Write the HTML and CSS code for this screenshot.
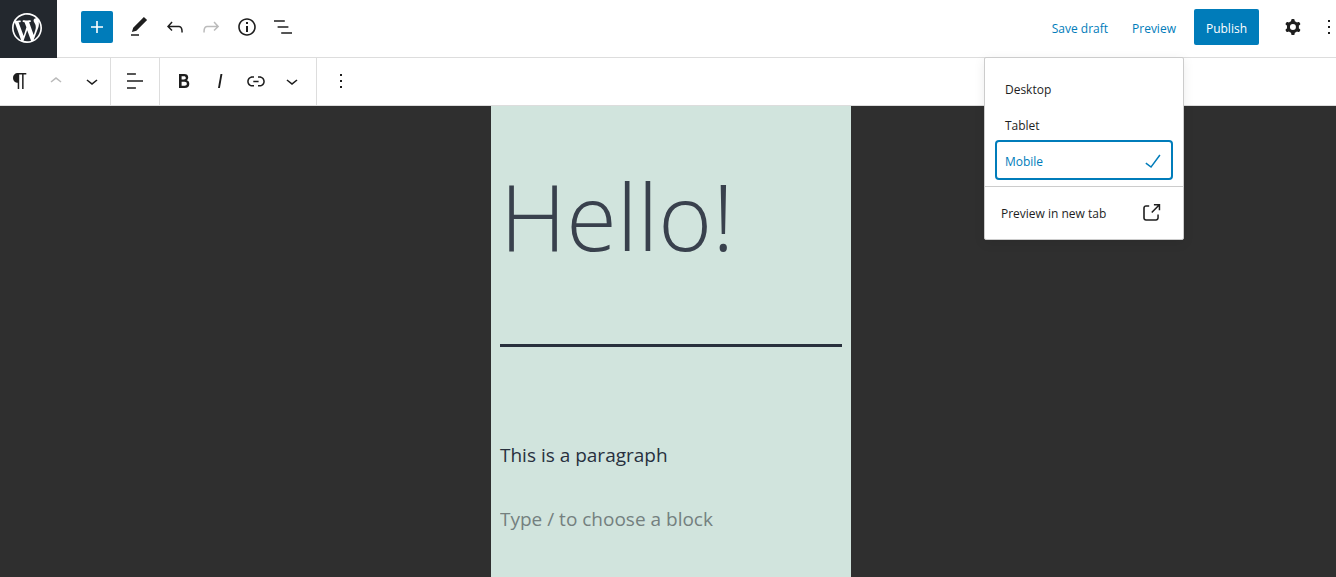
FILE: index.html
```html
<!DOCTYPE html>
<html lang="en">

<head>
    <meta charset="UTF-8">
    <meta name="viewport" content="width=device-width, initial-scale=1.0">
    <title>Edit Page</title>
    <link rel="stylesheet" href="styles.css">
</head>

<body>
    <header class="editor-header">
        <a class="site-logo" href="#" aria-label="View pages">
            <svg viewBox="-2 -2 24 24"><path d="M20 10c0-5.51-4.49-10-10-10C4.48 0 0 4.49 0 10c0 5.52 4.48 10 10 10 5.51 0 10-4.48 10-10zM7.78 15.37L4.37 6.22c.55-.02 1.17-.08 1.17-.08.5-.06.44-1.13-.06-1.11 0 0-1.45.11-2.37.11-.18 0-.37 0-.58-.01C4.12 2.69 6.87 1.11 10 1.11c2.33 0 4.45.87 6.05 2.34-.68-.11-1.65.39-1.65 1.58 0 .74.45 1.36.9 2.1.35.61.55 1.36.55 2.46 0 1.49-1.4 5-1.4 5l-3.03-8.37c.54-.02.82-.17.82-.17.5-.05.44-1.25-.06-1.22 0 0-1.44.12-2.38.12-.87 0-2.33-.12-2.33-.12-.5-.03-.56 1.2-.06 1.22l.92.08 1.26 3.41zM17.41 10c.24-.64.74-1.87.43-4.25.7 1.29 1.05 2.71 1.05 4.25 0 3.29-1.73 6.24-4.4 7.78.97-2.59 1.94-5.2 2.92-7.78zM6.1 18.09C3.12 16.65 1.11 13.53 1.11 10c0-1.3.23-2.48.72-3.59C3.25 10.3 4.67 14.2 6.1 18.09zm4.03-6.63l2.58 6.98c-.86.29-1.76.45-2.71.45-.79 0-1.57-.11-2.29-.33.81-2.38 1.62-4.74 2.42-7.1z"/></svg>
        </a>
        <div class="header-tools">
            <button class="inserter" aria-label="Add block">
                <svg viewBox="0 0 24 24"><path d="M18 11.2h-5.2V6h-1.6v5.2H6v1.6h5.2V18h1.6v-5.2H18z"/></svg>
            </button>
            <button class="icon-button" aria-label="Modes">
                <svg viewBox="0 0 24 24"><path d="M20.1 5.1L16.9 2 6.2 12.7l-1.3 4.4 4.5-1.3L20.1 5.1zM4 20.8h8v-1.5H4v1.5z"/></svg>
            </button>
            <button class="icon-button" aria-label="Undo">
                <svg viewBox="0 0 24 24"><path d="M18.3 11.7c-.6-.6-1.4-.9-2.3-.9H6.7l2.9-3.3-1.1-1-4.5 5L8.5 16l1-1-2.7-2.7H16c.5 0 .9.2 1.3.5 1 1 1 3.4 1 4.5v.3h1.5v-.2c0-1.5 0-4.3-1.5-5.7z"/></svg>
            </button>
            <button class="icon-button" aria-label="Redo" disabled>
                <svg viewBox="0 0 24 24"><path d="M15.6 6.5l-1.1 1 2.9 3.3H8c-.9 0-1.7.3-2.3.9-1.4 1.5-1.4 4.2-1.4 5.6v.2h1.5v-.3c0-1.1 0-3.5 1-4.5.3-.3.7-.5 1.3-.5h9.2L14.5 15l1.1 1.1 4.6-4.6-4.6-5z"/></svg>
            </button>
            <button class="icon-button" aria-label="Details">
                <svg viewBox="0 0 24 24"><path d="M12 3.2c-4.8 0-8.8 3.9-8.8 8.8 0 4.8 3.9 8.8 8.8 8.8 4.8 0 8.8-3.9 8.8-8.8 0-4.8-4-8.8-8.8-8.8zm0 16c-4 0-7.2-3.3-7.2-7.2C4.8 8 8 4.8 12 4.8s7.2 3.3 7.2 7.2c0 4-3.2 7.2-7.2 7.2zM11 17h2v-6h-2v6zm0-8h2V7h-2v2z"/></svg>
            </button>
            <button class="icon-button" aria-label="List view">
                <svg viewBox="0 0 24 24"><path d="M13.8 5.2H3v1.5h10.8V5.2zm-3.6 12v1.5H21v-1.5H10.2zm7.2-6H6.6v1.5h10.8v-1.5z"/></svg>
            </button>
        </div>
        <div class="header-settings">
            <button class="text-button">Save draft</button>
            <div class="preview">
                <button class="text-button">Preview</button>
                <div class="preview-menu">
                    <div class="menu-group">
                        <button class="menu-item">Desktop</button>
                        <button class="menu-item">Tablet</button>
                        <button class="menu-item selected">
                            Mobile
                            <svg viewBox="0 0 24 24"><path d="M18.3 5.6L9.9 16.9l-4.6-3.4-.9 1.2 5.8 4.3 9.3-12.6z"/></svg>
                        </button>
                    </div>
                    <a class="external-link" href="#">
                        Preview in new tab
                        <svg viewBox="0 0 24 24"><path d="M18.2 17c0 .7-.6 1.2-1.2 1.2H7c-.7 0-1.2-.6-1.2-1.2V7c0-.7.6-1.2 1.2-1.2h3.2V4.2H7C5.5 4.2 4.2 5.5 4.2 7v10c0 1.5 1.2 2.8 2.8 2.8h10c1.5 0 2.8-1.2 2.8-2.8v-3.6h-1.5V17zM14.9 3v1.5h3.7l-6.4 6.4 1.1 1.1 6.4-6.4v3.7h1.5V3h-6.3z"/></svg>
                    </a>
                </div>
            </div>
            <button class="publish">Publish</button>
            <button class="icon-button" aria-label="Settings">
                <svg viewBox="0 0 24 24"><path fill-rule="evenodd" d="M10.289 4.836A1 1 0 0111.275 4h1.306a1 1 0 01.987.836l.244 1.466c.787.26 1.503.679 2.108 1.218l1.393-.522a1 1 0 011.216.437l.653 1.13a1 1 0 01-.23 1.273l-1.148.944a6.025 6.025 0 010 2.435l1.149.946a1 1 0 01.23 1.272l-.653 1.13a1 1 0 01-1.216.437l-1.394-.522c-.605.54-1.32.958-2.108 1.218l-.244 1.466a1 1 0 01-.987.836h-1.306a1 1 0 01-.986-.836l-.244-1.466a5.995 5.995 0 01-2.108-1.218l-1.394.522a1 1 0 01-1.217-.436l-.653-1.131a1 1 0 01.23-1.272l1.149-.946a6.026 6.026 0 010-2.435l-1.148-.944a1 1 0 01-.23-1.272l.653-1.131a1 1 0 011.217-.437l1.393.522a5.994 5.994 0 012.108-1.218l.244-1.466zM14.929 12a3 3 0 11-6 0 3 3 0 016 0z"/></svg>
            </button>
            <button class="icon-button" aria-label="Options">
                <svg viewBox="0 0 24 24"><path d="M13 19h-2v-2h2v2zm0-6h-2v-2h2v2zm0-6h-2V5h2v2z"/></svg>
            </button>
        </div>
    </header>

    <div class="block-toolbar">
        <div class="toolbar-group">
            <button class="icon-button" aria-label="Paragraph">
                <svg viewBox="0 0 24 24"><path d="M18.3 4H9.9v-.1l-.9.2c-2.3.4-4 2.4-4 4.8s1.7 4.4 4 4.8l.7.1V20h1.5V5.5h2.9V20h1.5V5.5h2.7V4z"/></svg>
            </button>
            <button class="icon-button" aria-label="Move up" disabled>
                <svg viewBox="0 0 24 24"><path d="M6.5 12.4L12 8l5.5 4.4-.9 1.2L12 10l-4.5 3.6-1-1.2z"/></svg>
            </button>
            <button class="icon-button" aria-label="Move down">
                <svg viewBox="0 0 24 24"><path d="M17.5 11.6L12 16l-5.5-4.4.9-1.2L12 14l4.5-3.6 1 1.2z"/></svg>
            </button>
        </div>
        <div class="toolbar-group">
            <button class="icon-button" aria-label="Change text alignment">
                <svg viewBox="0 0 24 24"><path d="M4 19.8h8.9v-1.5H4v1.5zm8.9-15.6H4v1.5h8.9V4.2zm-8.9 7v1.5h16v-1.5H4z"/></svg>
            </button>
        </div>
        <div class="toolbar-group">
            <button class="icon-button" aria-label="Bold">
                <svg viewBox="0 0 24 24"><path d="M14.7 11.3c1-.6 1.5-1.6 1.5-3 0-2.3-1.3-3.4-4-3.4H7v14h5.8c1.4 0 2.5-.3 3.3-1 .8-.7 1.2-1.7 1.2-2.9.1-1.9-.8-3.1-2.6-3.7zm-5.1-4h2.3c.6 0 1.1.1 1.4.4.3.3.5.7.5 1.2s-.2 1-.5 1.2c-.3.3-.8.4-1.4.4H9.6V7.3zm4.6 9c-.4.3-1 .4-1.7.4H9.6v-3.9h2.9c.7 0 1.3.2 1.7.5.4.3.6.8.6 1.5s-.2 1.2-.6 1.5z"/></svg>
            </button>
            <button class="icon-button" aria-label="Italic">
                <svg viewBox="0 0 24 24"><path d="M12.5 5L10 19h1.9l2.5-14z"/></svg>
            </button>
            <button class="icon-button" aria-label="Link">
                <svg viewBox="0 0 24 24"><path d="M15.6 7.2H14v1.5h1.6c2 0 3.7 1.7 3.7 3.7s-1.7 3.7-3.7 3.7H14v1.5h1.6c2.8 0 5.2-2.3 5.2-5.2 0-2.9-2.3-5.2-5.2-5.2zM4.7 12.4c0-2 1.7-3.7 3.7-3.7H10V7.2H8.4c-2.9 0-5.2 2.3-5.2 5.2 0 2.9 2.3 5.2 5.2 5.2H10v-1.5H8.4c-2 0-3.7-1.7-3.7-3.7zm4.6.9h5.3v-1.5H9.3v1.5z"/></svg>
            </button>
            <button class="icon-button" aria-label="More rich text controls">
                <svg viewBox="0 0 24 24"><path d="M17.5 11.6L12 16l-5.5-4.4.9-1.2L12 14l4.5-3.6 1 1.2z"/></svg>
            </button>
        </div>
        <div class="toolbar-group">
            <button class="icon-button" aria-label="More options">
                <svg viewBox="0 0 24 24"><path d="M13 19h-2v-2h2v2zm0-6h-2v-2h2v2zm0-6h-2V5h2v2z"/></svg>
            </button>
        </div>
    </div>

    <main class="visual-editor">
        <article class="canvas">
            <h1 class="post-title">Hello!</h1>
            <hr class="title-rule">
            <p class="paragraph">This is a paragraph</p>
            <input class="paragraph" type="text" aria-label="Empty block" placeholder="Type / to choose a block">
        </article>
    </main>
</body>

</html>
```

FILE: styles.css
```css
:root {
    --accent: #007cba;
    --ink: #1e1e1e;
    --line: #dddddd;
    --canvas: #d1e4dd;
    --canvas-ink: #28303d;
}

* {
    box-sizing: border-box;
}

body {
    display: flex;
    flex-direction: column;
    min-height: 100vh;
    margin: 0;
    overflow-x: hidden;
    font-family: "Open Sans", "Noto Sans", sans-serif;
    font-size: 12px;
    color: var(--ink);
    background: #2f2f2f;
}

button {
    display: flex;
    align-items: center;
    padding: 0;
    border: none;
    background: none;
    color: inherit;
    font: inherit;
    white-space: nowrap;
    cursor: pointer;
}

svg {
    width: 24px;
    height: 24px;
    fill: currentColor;
}

/* Header */
.editor-header {
    display: flex;
    height: 58px;
    background: #fff;
    border-bottom: 1px solid var(--line);
}

.site-logo {
    display: flex;
    align-items: center;
    justify-content: center;
    width: 57px;
    height: 58px;
    padding-right: 3px;
    padding-bottom: 2px;
    background: #23282e;
    color: #fff;
}

.site-logo svg {
    width: 36px;
    height: 36px;
}

.header-tools {
    display: flex;
    align-items: center;
    padding: 0 24px 3px;
}

.inserter {
    justify-content: center;
    width: 32px;
    height: 32px;
    margin-right: 8px;
    border-radius: 2px;
    background: var(--accent);
    color: #fff;
}

.icon-button {
    flex-shrink: 0;
    justify-content: center;
    width: 36px;
    height: 36px;
}

.icon-button:disabled {
    color: #bbb;
    cursor: default;
}

.header-settings {
    display: flex;
    align-items: center;
    margin-left: auto;
    margin-right: -11px;
    padding-bottom: 3px;
}

.text-button {
    height: 36px;
    padding: 2px 12px 0;
    color: var(--accent);
}

.publish {
    height: 36px;
    margin: 0 16px 0 6px;
    padding: 2px 12px 0;
    border-radius: 2px;
    background: var(--accent);
    color: #fff;
}

/* Preview dropdown */
.preview {
    position: relative;
}

.preview-menu {
    position: absolute;
    top: 48px;
    right: 4px;
    z-index: 10;
    width: 200px;
    background: #fff;
    border: 1px solid #ccc;
    border-radius: 2px;
    box-shadow: 0 3px 12px rgba(0, 0, 0, 0.08);
}

.menu-group {
    padding: 12px 12px 8px;
    border-bottom: 1px solid #ccc;
}

.menu-item {
    justify-content: space-between;
    width: 100%;
    height: 36px;
    padding: 2px 6px 0 8px;
    border-radius: 2px;
}

.menu-item.selected {
    color: var(--accent);
    box-shadow: 0 0 0 2px var(--accent);
}

.external-link {
    display: flex;
    align-items: center;
    justify-content: space-between;
    height: 52px;
    padding: 0 20px 0 16px;
    color: inherit;
    text-decoration: none;
}

/* Block toolbar */
.block-toolbar {
    display: flex;
    height: 48px;
    background: #fff;
    border-bottom: 1px solid var(--line);
}

.toolbar-group {
    display: flex;
    align-items: center;
    padding: 0 6px 1px;
    border-right: 1px solid var(--line);
}

.toolbar-group:first-child {
    padding: 0 0 1px 2px;
}

.toolbar-group:last-child {
    border-right: none;
}

/* Canvas */
.visual-editor {
    display: flex;
    flex: 1;
    justify-content: center;
    padding-left: 6px;
}

.canvas {
    width: 360px;
    padding: 46px 9px 0;
    background: var(--canvas);
    color: var(--canvas-ink);
}

.post-title {
    margin: 0 0 64px;
    color: #39414d;
    font-size: 92px;
    font-weight: 300;
    line-height: 128px;
}

.title-rule {
    margin: 0 0 92px;
    border: none;
    border-top: 3px solid var(--canvas-ink);
}

.paragraph {
    display: block;
    width: 100%;
    height: 32px;
    margin: 0 0 32px;
    padding: 0;
    border: none;
    background: none;
    color: inherit;
    font: inherit;
    font-size: 19px;
    line-height: 32px;
}

.paragraph::placeholder {
    color: #74807f;
    opacity: 1;
}
```
